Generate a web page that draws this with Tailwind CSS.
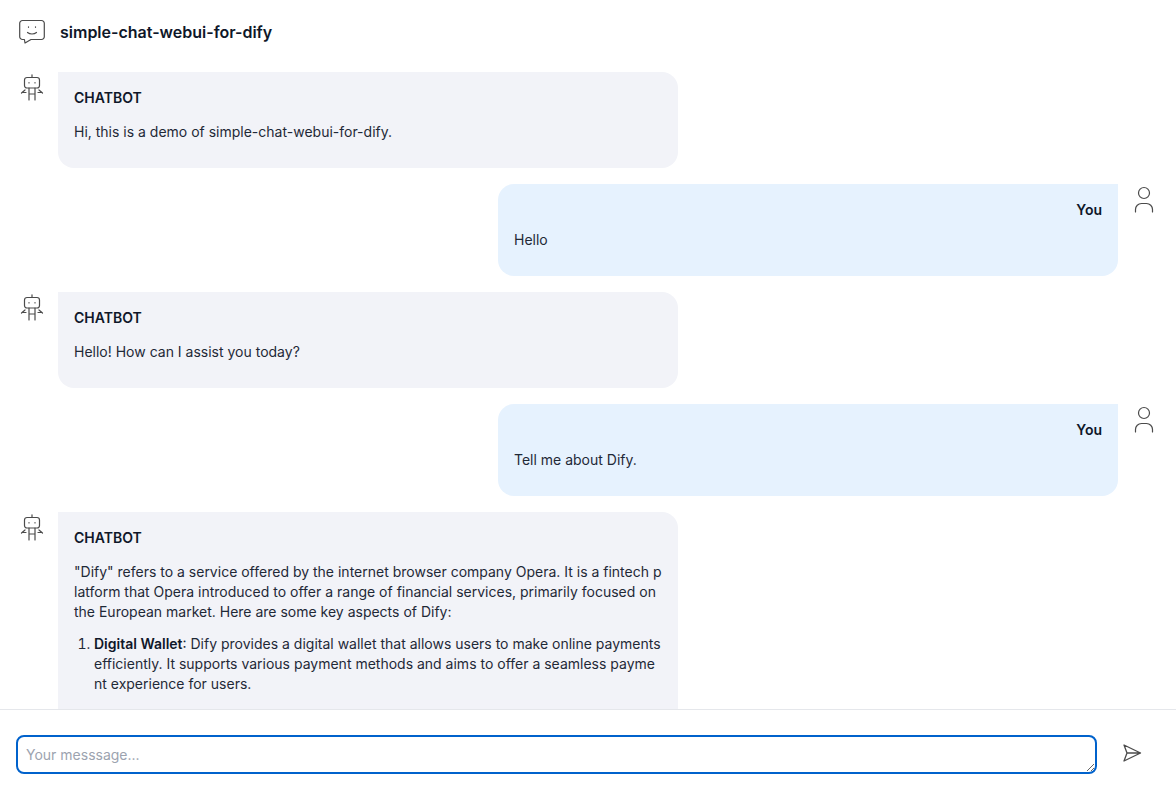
<!DOCTYPE html>
<html lang="en">
  <head>
    <meta charset="UTF-8" />
    <meta name="viewport" content="width=device-width, initial-scale=1.0" />
    <script src="https://cdn.jsdelivr.net/npm/@tailwindcss/browser@4"></script>
    <title>simple-chat-webui-for-dify</title>
  </head>
  <body class="bg-white h-screen overflow-hidden flex flex-col font-['Inter',sans-serif] text-sm leading-5 text-[#1f2937]">
    <header class="h-16 shrink-0 flex items-center pl-4">
      <svg class="w-8 h-8 text-[#4b4b4b]" viewBox="0 0 32 32" fill="none" stroke="currentColor" stroke-width="1.2" stroke-linejoin="round" stroke-linecap="round">
        <path d="M6.5 4.5h19a2.8 2.8 0 0 1 2.8 2.8v13.4a2.8 2.8 0 0 1-2.8 2.8H15l-6 3.5-.6-3.5H6.5a2.8 2.8 0 0 1-2.8-2.8V7.300a2.800 2.800 0 0 1 2.800-2.800z" />
        <path d="M11.500 16.500c2.500 2 6.500 2 9 0" />
        <path d="M12.500 10.800v.5M19.500 10.800v.5" />
      </svg>
      <h1 class="ml-3 text-base font-semibold text-[#0f1729]">simple-chat-webui-for-dify</h1>
    </header>

    <main class="flex-1 min-h-0 overflow-hidden px-4 pt-2 flex flex-col gap-4">
      <div class="flex shrink-0">
        <svg class="w-8 h-8 shrink-0 text-[#4b4b4b]" viewBox="0 0 32 32" fill="none" stroke="currentColor" stroke-width="1.200" stroke-linecap="round" stroke-linejoin="round">
          <rect x="8.500" y="5.500" width="15" height="10.500" rx="2.500" />
          <path d="M16 5.500V2.800M13 16v12M19 16v12M13 22h6M9 18l-3.500 3M23 18l3.500 3M6 20.500h4M22 20.500h4" />
          <path d="M13 10.500v.5M19 10.500v.5" />
        </svg>
        <div class="ml-2.5 w-[620px] bg-[#f2f3f8] rounded-2xl rounded-tl-none pt-4 px-4 pb-[26px]">
          <div class="font-semibold text-[#0f1729]">CHATBOT</div>
          <p class="mt-3.5">Hi, this is a demo of simple-chat-webui-for-dify.</p>
        </div>
      </div>

      <div class="flex justify-end shrink-0">
        <div class="w-[620px] bg-[#e6f2fe] rounded-2xl rounded-tr-none pt-4 px-4 pb-[26px]">
          <div class="font-semibold text-[#0f1729] text-right">You</div>
          <p class="mt-2.5">Hello</p>
        </div>
        <svg class="ml-2.5 w-8 h-8 shrink-0 text-[#4b4b4b]" viewBox="0 0 32 32" fill="none" stroke="currentColor" stroke-width="1.200" stroke-linecap="round">
          <circle cx="16" cy="9" r="5.500" />
          <path d="M7.500 28v-2.500a6 6 0 0 1 6-6h5a6 6 0 0 1 6 6V28" />
        </svg>
      </div>

      <div class="flex shrink-0">
        <svg class="w-8 h-8 shrink-0 text-[#4b4b4b]" viewBox="0 0 32 32" fill="none" stroke="currentColor" stroke-width="1.200" stroke-linecap="round" stroke-linejoin="round">
          <rect x="8.500" y="5.500" width="15" height="10.500" rx="2.500" />
          <path d="M16 5.500V2.800M13 16v12M19 16v12M13 22h6M9 18l-3.500 3M23 18l3.500 3M6 20.500h4M22 20.500h4" />
          <path d="M13 10.500v.5M19 10.500v.5" />
        </svg>
        <div class="ml-2.5 w-[620px] bg-[#f2f3f8] rounded-2xl rounded-tl-none pt-4 px-4 pb-[26px]">
          <div class="font-semibold text-[#0f1729]">CHATBOT</div>
          <p class="mt-3.5">Hello! How can I assist you today?</p>
        </div>
      </div>

      <div class="flex justify-end shrink-0">
        <div class="w-[620px] bg-[#e6f2fe] rounded-2xl rounded-tr-none pt-4 px-4 pb-[26px]">
          <div class="font-semibold text-[#0f1729] text-right">You</div>
          <p class="mt-2.5">Tell me about Dify.</p>
        </div>
        <svg class="ml-2.5 w-8 h-8 shrink-0 text-[#4b4b4b]" viewBox="0 0 32 32" fill="none" stroke="currentColor" stroke-width="1.200" stroke-linecap="round">
          <circle cx="16" cy="9" r="5.500" />
          <path d="M7.500 28v-2.500a6 6 0 0 1 6-6h5a6 6 0 0 1 6 6V28" />
        </svg>
      </div>

      <div class="flex shrink-0">
        <svg class="w-8 h-8 shrink-0 text-[#4b4b4b]" viewBox="0 0 32 32" fill="none" stroke="currentColor" stroke-width="1.200" stroke-linecap="round" stroke-linejoin="round">
          <rect x="8.500" y="5.500" width="15" height="10.500" rx="2.500" />
          <path d="M16 5.500V2.800M13 16v12M19 16v12M13 22h6M9 18l-3.500 3M23 18l3.500 3M6 20.500h4M22 20.500h4" />
          <path d="M13 10.500v.5M19 10.500v.5" />
        </svg>
        <div class="ml-2.5 w-[620px] bg-[#f2f3f8] rounded-2xl rounded-tl-none pt-4 px-4 pb-10 break-all">
          <div class="font-semibold text-[#0f1729]">CHATBOT</div>
          <p class="mt-3.5">"Dify" refers to a service offered by the internet browser company Opera. It is a fintech platform that Opera introduced to offer a range of financial services, primarily focused on the European market. Here are some key aspects of Dify:</p>
          <ol class="mt-3 list-decimal pl-5">
            <li><strong class="font-semibold text-[#0f1729]">Digital Wallet</strong>: Dify provides a digital wallet that allows users to make online payments efficiently. It supports various payment methods and aims to offer a seamless payment experience for users.</li>
          </ol>
        </div>
      </div>
    </main>

    <footer class="h-[88px] shrink-0 border-t border-[#e5e7eb] bg-white flex items-start pt-[25px] pl-4 pr-4">
      <textarea autofocus rows="1" placeholder="Your messsage..." class="block w-[1081px] h-[39px] rounded-lg border-2 border-[#0062cc] outline-none px-2 py-2 text-sm leading-5 placeholder:text-[#9ca3af]"></textarea>
      <svg class="ml-[19px] mt-[2px] w-8 h-8 text-[#4b4b4b]" viewBox="0 0 32 32" fill="none" stroke="currentColor" stroke-width="1.300" stroke-linejoin="round" stroke-linecap="round">
        <path d="M8 8l16.500 8L8 24l3-8zM11 16h13.500" />
      </svg>
    </footer>
  </body>
</html>
